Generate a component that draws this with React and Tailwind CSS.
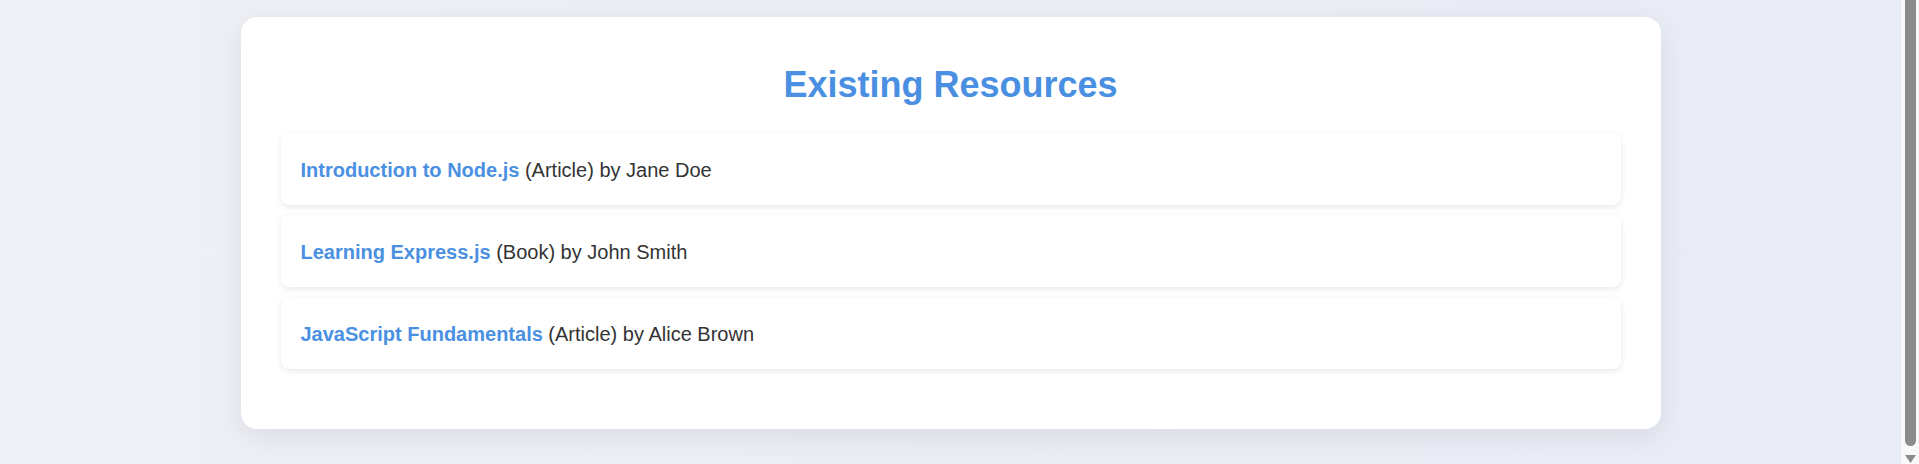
const resources = [
  { title: 'Introduction to Node.js', type: 'Article', author: 'Jane Doe' },
  { title: 'Learning Express.js', type: 'Book', author: 'John Smith' },
  { title: 'JavaScript Fundamentals', type: 'Article', author: 'Alice Brown' },
];

function Scrollbar() {
  return (
    <div className="flex w-[18px] shrink-0 flex-col bg-[#f9f9f9] pl-[4px]">
      <div className="h-[447px] w-[11px] rounded-b-full bg-[#8b8b8b]" />
      <svg className="mt-[9px]" width="11" height="9" viewBox="0 0 11 9">
        <path d="M0 0 H11 L5.5 8 Z" fill="#8b8b8b" />
      </svg>
    </div>
  );
}

export default function App() {
  return (
    <div className="flex h-[464px] overflow-hidden font-['Liberation_Sans',Arial,sans-serif]">
      <main className="flex-1 bg-[linear-gradient(to_right,#eff0f5,#e8ecf5)] pt-[17px]">
        <div className="mx-auto w-[1420px] rounded-2xl bg-white px-10 pt-[48px] pb-[60px] shadow-[0_8px_30px_rgba(0,0,0,0.08)]">
          <h2 className="mb-[28px] text-center text-[36px] font-bold leading-[40px] text-[#4a90e2]">Existing Resources</h2>
          <ul className="flex flex-col gap-[10px]">
            {resources.map((item) => (
              <li
                key={item.title}
                className="flex h-[72px] items-center rounded-lg bg-white px-5 pt-[2px] text-[20px] text-[#333] shadow-[0_2px_6px_rgba(0,0,0,0.09)]"
              >
                <span>
                  <strong className="font-bold text-[#4a90e2]">{item.title}</strong> ({item.type}) by {item.author}
                </span>
              </li>
            ))}
          </ul>
        </div>
      </main>
      <Scrollbar />
    </div>
  );
}
